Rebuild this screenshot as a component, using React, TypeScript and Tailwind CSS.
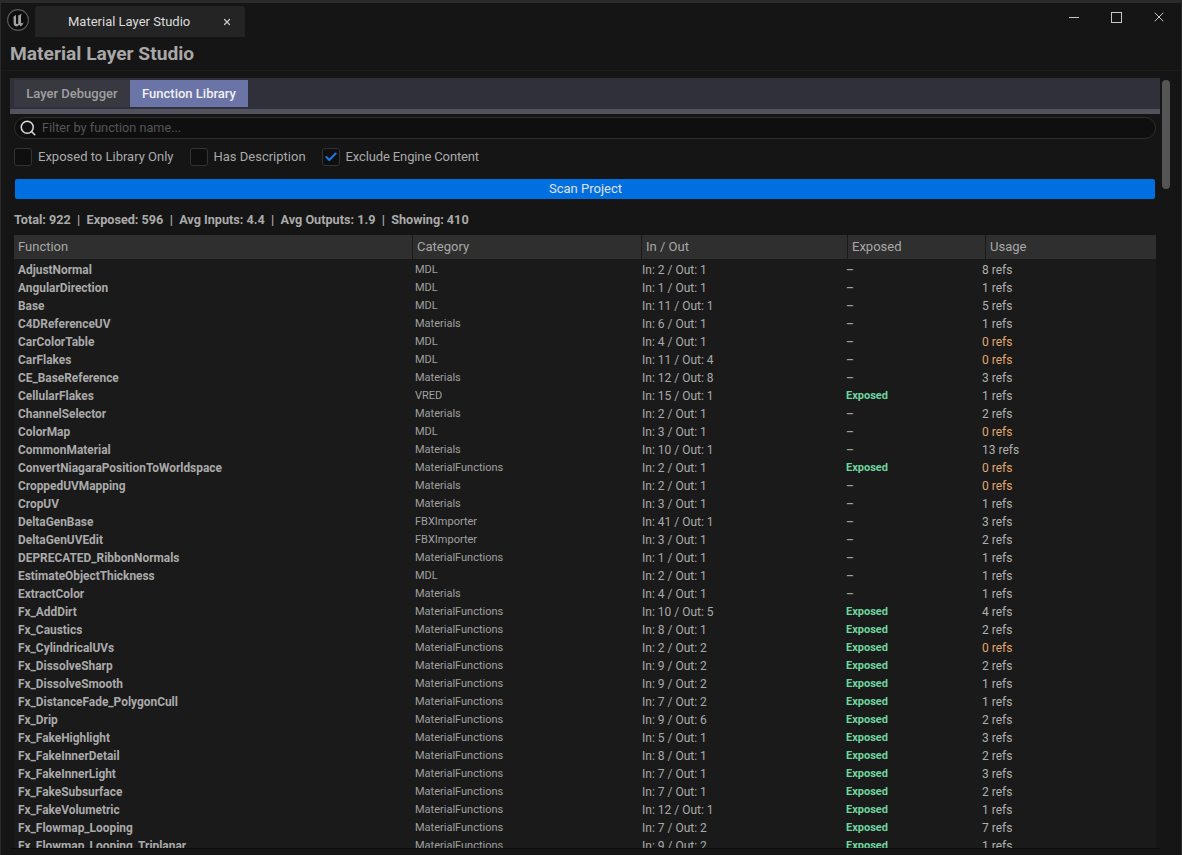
import { Search, Check, X } from "lucide-react"

type Row = [string, string, string, boolean, number]

const rows: Row[] = [
  ["AdjustNormal", "MDL", "In: 2 / Out: 1", false, 8],
  ["AngularDirection", "MDL", "In: 1 / Out: 1", false, 1],
  ["Base", "MDL", "In: 11 / Out: 1", false, 5],
  ["C4DReferenceUV", "Materials", "In: 6 / Out: 1", false, 1],
  ["CarColorTable", "MDL", "In: 4 / Out: 1", false, 0],
  ["CarFlakes", "MDL", "In: 11 / Out: 4", false, 0],
  ["CE_BaseReference", "Materials", "In: 12 / Out: 8", false, 3],
  ["CellularFlakes", "VRED", "In: 15 / Out: 1", true, 1],
  ["ChannelSelector", "Materials", "In: 2 / Out: 1", false, 2],
  ["ColorMap", "MDL", "In: 3 / Out: 1", false, 0],
  ["CommonMaterial", "Materials", "In: 10 / Out: 1", false, 13],
  ["ConvertNiagaraPositionToWorldspace", "MaterialFunctions", "In: 2 / Out: 1", true, 0],
  ["CroppedUVMapping", "Materials", "In: 2 / Out: 1", false, 0],
  ["CropUV", "Materials", "In: 3 / Out: 1", false, 1],
  ["DeltaGenBase", "FBXImporter", "In: 41 / Out: 1", false, 3],
  ["DeltaGenUVEdit", "FBXImporter", "In: 3 / Out: 1", false, 2],
  ["DEPRECATED_RibbonNormals", "MaterialFunctions", "In: 1 / Out: 1", false, 1],
  ["EstimateObjectThickness", "MDL", "In: 2 / Out: 1", false, 1],
  ["ExtractColor", "Materials", "In: 4 / Out: 1", false, 1],
  ["Fx_AddDirt", "MaterialFunctions", "In: 10 / Out: 5", true, 4],
  ["Fx_Caustics", "MaterialFunctions", "In: 8 / Out: 1", true, 2],
  ["Fx_CylindricalUVs", "MaterialFunctions", "In: 2 / Out: 2", true, 0],
  ["Fx_DissolveSharp", "MaterialFunctions", "In: 9 / Out: 2", true, 2],
  ["Fx_DissolveSmooth", "MaterialFunctions", "In: 9 / Out: 2", true, 1],
  ["Fx_DistanceFade_PolygonCull", "MaterialFunctions", "In: 7 / Out: 2", true, 1],
  ["Fx_Drip", "MaterialFunctions", "In: 9 / Out: 6", true, 2],
  ["Fx_FakeHighlight", "MaterialFunctions", "In: 5 / Out: 1", true, 3],
  ["Fx_FakeInnerDetail", "MaterialFunctions", "In: 8 / Out: 1", true, 2],
  ["Fx_FakeInnerLight", "MaterialFunctions", "In: 7 / Out: 1", true, 3],
  ["Fx_FakeSubsurface", "MaterialFunctions", "In: 7 / Out: 1", true, 2],
  ["Fx_FakeVolumetric", "MaterialFunctions", "In: 12 / Out: 1", true, 1],
  ["Fx_Flowmap_Looping", "MaterialFunctions", "In: 7 / Out: 2", true, 7],
  ["Fx_Flowmap_Looping_Triplanar", "MaterialFunctions", "In: 9 / Out: 2", true, 1],
]

function CheckBox({ label, checked }: { label: string; checked?: boolean }) {
  return (
    <div className="flex items-center gap-[6px]">
      <div className="w-[18px] h-[18px] rounded-[3px] border border-[#333] bg-[#0f0f0f] flex items-center justify-center">
        {checked && <Check className="w-[14px] h-[14px] text-[#1679e4]" strokeWidth={3.5} />}
      </div>
      <span className={checked ? "text-[13px] tracking-[-0.13px] text-[#aaa]" : "text-[13px] text-[#aaa]"}>{label}</span>
    </div>
  )
}

function Logo() {
  return (
    <svg viewBox="0 0 22 22" className="w-[22px] h-[22px] mt-[3px] shrink-0">
      <circle cx="11" cy="11" r="10.4" fill="#0c0c0c" stroke="#5c5c5c" strokeWidth="1.1" />
      <path
        d="M5.6 8.6 L9 5.8 L9 14 Q9 15.4 10.4 14.9 L11.2 14.4 L11.2 6.6 L15 4.8 L14 6.6 L14 13.6 L15 14.4 L16.8 13.2 Q16 15.8 13.6 17.4 L12.4 15.8 L10 17.5 Q6.4 17.4 6.6 13.8 L6.6 8.2 Z"
        fill="#a0a0a0"
      />
    </svg>
  )
}

export default function App() {
  return (
    <div className="w-[1182px] h-[855px] overflow-hidden bg-[#151515] flex flex-col border-t-[3px] border-l border-r border-[#2a2a2a] font-['Roboto',sans-serif]">
      {/* Title bar */}
      <div className="h-[34px] flex items-start shrink-0 pl-[6px] pt-[3px]">
        <Logo />
        <div className="ml-[6px] w-[210px] h-[31px] bg-[#242424] rounded-t-[3px] flex items-center pl-[33px]">
          <span className="text-[13px] text-[#dcdcdc]">Material Layer Studio</span>
          <X className="w-[10px] h-[10px] ml-[32px] text-[#c8c8c8]" strokeWidth={3} />
        </div>
        <div className="ml-auto flex items-center pr-[14px] pt-[3px]">
          <div className="w-[10px] h-px bg-[#c8c8c8]" />
          <div className="w-[11px] h-[11px] ml-[32px] border border-[#c8c8c8]" />
          <X className="w-[16px] h-[16px] ml-[29px] text-[#c8c8c8]" strokeWidth={1.5} />
        </div>
      </div>

      {/* Heading */}
      <div className="h-[34px] shrink-0 pl-[9px] pt-[2px] flex items-center border-b border-[#1c1c1c]">
        <h1 className="text-[19.2px] font-bold text-[#a8a8a8]">Material Layer Studio</h1>
      </div>

      <div className="flex-1 min-h-0 flex pt-[7px] pl-[9px] pb-[6px]">
        <div className="w-[1150px] flex flex-col min-h-0 border-b border-[#0d0d0d]">
          {/* Tabs */}
          <div className="h-[31px] shrink-0 bg-[#30303a] pl-[4px] pt-[2px]">
            <div className="flex h-[27px]">
              <div className="w-[116px] bg-[#383840] flex items-center justify-center text-[13px] font-medium text-[#a0a0a0]">Layer Debugger</div>
              <div className="w-[118px] bg-[#6b74a6] flex items-center justify-center text-[13px] font-medium text-[#f0f0f0]">Function Library</div>
            </div>
          </div>
          <div className="h-[5px] shrink-0 bg-[#54525e]" />

          {/* Filters */}
          <div className="h-[22px] shrink-0 mt-[3px] ml-[4px] w-[1142px] rounded-full border border-[#2e2e2e] bg-[#0f0f0f] flex items-center pl-[4px] gap-[5px]">
            <Search className="w-[18px] h-[18px] text-[#d8d8d8]" strokeWidth={2} />
            <span className="text-[12.7px] text-[#555]">Filter by function name...</span>
          </div>
          <div className="shrink-0 mt-[8px] ml-[4px] flex items-center gap-[16px]">
            <CheckBox label="Exposed to Library Only" />
            <CheckBox label="Has Description" />
            <CheckBox label="Exclude Engine Content" checked />
          </div>
          <div className="h-[20px] shrink-0 mt-[12px] ml-[5px] w-[1140px] rounded-[2px] bg-[#0070e0] flex items-center justify-center pl-px text-[13px] text-[#e0e0e0]">Scan Project</div>
          <div className="shrink-0 h-[16px] mt-[13px] ml-[4px] flex items-center text-[12.67px] font-bold text-[#aaa] whitespace-pre">
            Total: 922  |  Exposed: 596  |  Avg Inputs: 4.4  |  Avg Outputs: 1.9  |  Showing: 410
          </div>

          {/* Table */}
          <div className="mt-[7px] ml-[4px] w-[1142px] flex-1 min-h-0 flex flex-col overflow-hidden bg-[#1a1a1a]">
            <div className="h-[24px] shrink-0 bg-[#2f2f2f] grid grid-cols-[398px_229px_206px_138px_1fr] text-[13px] text-[#a8a8a8]">
              <div className="pl-[4px] flex items-center">Function</div>
              <div className="pl-[4px] flex items-center border-l border-[#1a1a1a]">Category</div>
              <div className="pl-[4px] flex items-center border-l border-[#1a1a1a]">In / Out</div>
              <div className="pl-[4px] flex items-center border-l border-[#1a1a1a]">Exposed</div>
              <div className="pl-[4px] flex items-center border-l border-[#1a1a1a]">Usage</div>
            </div>
            <div className="pt-[2px]">
              {rows.map((r) => (
                <div key={r[0]} className="h-[18px] grid grid-cols-[401px_227px_204px_136px_1fr] items-center leading-[16px]">
                  <div className="pl-[4px] pt-px text-[11.9px] font-bold text-[#aaa] whitespace-nowrap">{r[0]}</div>
                  <div className="pt-px text-[11px] text-[#a0a0a0]">{r[1]}</div>
                  <div className="text-[12px] text-[#aaa]">{r[2]}</div>
                  {r[3] ? (
                    <div className="pt-px text-[11px] font-bold text-[#6fd6a0]">Exposed</div>
                  ) : (
                    <div className="text-[12px] font-medium text-[#a0a0a0]">–</div>
                  )}
                  <div className={r[4] === 0 ? "text-[12px] text-[#e0a870]" : "text-[12px] text-[#b0b0b0]"}>{r[4]} refs</div>
                </div>
              ))}
            </div>
          </div>
        </div>

        {/* Scrollbar */}
        <div className="w-[8px] h-[109px] ml-[2px] mt-[2px] rounded-full bg-[#555]" />
      </div>
    </div>
  )
}
